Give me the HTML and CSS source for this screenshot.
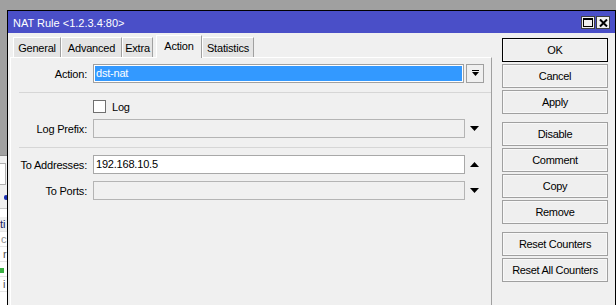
FILE: index.html
```html
<!DOCTYPE html>
<html lang="en">

<head>
    <meta charset="UTF-8">
    <title>NAT Rule</title>
    <link rel="stylesheet" href="styles.css">
</head>

<body>
    <div class="desk">
        <!-- part of the window behind -->
        <div class="behind">
            <div class="behind-pane">
                <div class="behind-field"></div>
                <div class="behind-dot"></div>
                <div class="behind-rows">
                    <div class="b-row b-head">ti</div>
                    <div class="b-row b-gray">c</div>
                    <div class="b-row b-right">r</div>
                    <div class="b-row"><span class="b-icon"></span></div>
                    <div class="b-row b-right">i</div>
                </div>
            </div>
        </div>

        <div class="window">
            <div class="titlebar">
                <span class="title">NAT Rule &lt;1.2.3.4:80&gt;</span>
                <div class="title-btns">
                    <span class="tbtn">
                        <svg width="10" height="9" viewBox="0 0 10 9"><path d="M0 0h10v9H0z M1 2v6h8V2z" fill="#000" fill-rule="evenodd"/></svg>
                    </span>
                    <span class="tbtn">
                        <svg width="9" height="8" viewBox="0 0 9 8"><path d="M1 0.5l7 7M8 0.5l-7 7" stroke="#000" stroke-width="2"/></svg>
                    </span>
                </div>
            </div>

            <div class="client">
                <div class="tabs-area">
                    <div class="tabs">
                        <div class="tab tab-general">General</div>
                        <div class="tab tab-advanced">Advanced</div>
                        <div class="tab tab-extra">Extra</div>
                        <div class="tab tab-action active">Action</div>
                        <div class="tab tab-stats">Statistics</div>
                    </div>

                    <div class="panel">
                        <div class="row">
                            <label class="label">Action:</label>
                            <div class="select">dst-nat</div>
                            <div class="drop-btn">
                                <svg width="7" height="7" viewBox="0 0 7 7"><path d="M0 0h7v1H0z M0 2h7L3.5 6z" fill="#000"/></svg>
                            </div>
                        </div>

                        <div class="sep sep-first"></div>

                        <div class="row row-check">
                            <span class="label"></span>
                            <span class="checkbox"></span>
                            <span class="check-text">Log</span>
                        </div>

                        <div class="row row-prefix">
                            <label class="label">Log Prefix:</label>
                            <div class="field disabled"></div>
                            <div class="tail">
                                <svg width="9" height="5" viewBox="0 0 9 5"><path d="M0 0h9L4.5 5z" fill="#000"/></svg>
                            </div>
                        </div>

                        <div class="sep"></div>

                        <div class="row row-addr">
                            <label class="label">To Addresses:</label>
                            <div class="field">192.168.10.5</div>
                            <div class="tail">
                                <svg width="9" height="5" viewBox="0 0 9 5"><path d="M0 5h9L4.5 0z" fill="#000"/></svg>
                            </div>
                        </div>

                        <div class="row row-ports">
                            <label class="label">To Ports:</label>
                            <div class="field disabled"></div>
                            <div class="tail">
                                <svg width="9" height="5" viewBox="0 0 9 5"><path d="M0 0h9L4.5 5z" fill="#000"/></svg>
                            </div>
                        </div>
                    </div>
                </div>

                <div class="buttons">
                    <button class="btn default">OK</button>
                    <button class="btn">Cancel</button>
                    <button class="btn">Apply</button>
                    <button class="btn group">Disable</button>
                    <button class="btn">Comment</button>
                    <button class="btn">Copy</button>
                    <button class="btn">Remove</button>
                    <button class="btn group">Reset Counters</button>
                    <button class="btn">Reset All Counters</button>
                </div>
            </div>
        </div>
    </div>
</body>

</html>
```

FILE: styles.css
```css
* {
    box-sizing: border-box;
    margin: 0;
    padding: 0;
}

body {
    width: 616px;
    height: 305px;
    overflow: hidden;
    background: #a0a0a0;
    font-family: "Liberation Sans", Arial, sans-serif;
    font-size: 11px;
    letter-spacing: -0.2px;
    color: #000;
}

.desk {
    display: flex;
    height: 305px;
}

/* window in the background */
.behind {
    width: 7px;
    flex: none;
    display: flex;
    flex-direction: column;
    overflow: hidden;
}

.behind-pane {
    margin-top: 155px;
    flex: 1;
    background: #f0f0f0;
    border-top: 1px solid #8a8a8a;
    display: flex;
    flex-direction: column;
}

.behind-field {
    margin-top: 7px;
    height: 22px;
    width: 6px;
    background: #fff;
    border: 1px solid #b0b0b0;
    border-left: none;
}

.behind-dot {
    margin: 10px 0 0 4px;
    width: 4px;
    height: 5px;
    border-radius: 2px;
    background: #1a2fb0;
}

.behind-rows {
    margin-top: 8px;
    border-top: 1px solid #c8c8c8;
    background: #fff;
    flex: 1;
    white-space: nowrap;
}

.b-row {
    height: 15px;
    line-height: 15px;
    font-size: 11px;
    letter-spacing: 0;
    border-bottom: 1px solid #e6e6e6;
}

.b-head {
    margin-top: 8px;
    background: #f0f0f0;
    color: #102060;
}

.b-gray {
    padding-left: 1px;
    color: #909090;
}

.b-right {
    padding-left: 3px;
    color: #505050;
}

.b-icon {
    display: inline-block;
    width: 4px;
    height: 5px;
    background: #3cb043;
}

/* main window */
.window {
    width: 609px;
    margin-top: 10px;
    border: 1px solid #000;
    border-bottom: none;
    background: #f0f0f0;
    display: flex;
    flex-direction: column;
}

.titlebar {
    height: 22px;
    background: #4a4fc8;
    color: #fff;
    display: flex;
    align-items: center;
    padding: 1px 5px 0 5px;
}

.title {
    font-size: 11px;
    letter-spacing: 0;
}

.title-btns {
    margin-left: auto;
    display: flex;
    gap: 1px;
}

.tbtn {
    width: 14px;
    height: 13px;
    background: #f0f0f0;
    border: 1px solid #404040;
    display: flex;
    align-items: center;
    justify-content: center;
}

.client {
    display: flex;
    flex: 1;
}

.tabs-area {
    width: 482px;
    margin-left: 2px;
    display: flex;
    flex-direction: column;
}

.tabs {
    height: 24px;
    display: flex;
    align-items: flex-end;
    padding-left: 3px;
}

.tab {
    height: 20px;
    background: #e4e4e4;
    border: 1px solid;
    border-color: #fff #a0a0a0 transparent #fff;
    border-bottom: none;
    display: flex;
    align-items: center;
    justify-content: center;
}

.tab-general {
    width: 48px;
}

.tab-advanced {
    width: 61px;
}

.tab-extra {
    width: 31px;
    margin-right: 3px;
}

.tab-action {
    width: 46px;
}

.tab-stats {
    width: 52px;
}

.tab.active {
    height: 23px;
    margin-bottom: -1px;
    background: #f0f0f0;
    position: relative;
    z-index: 1;
    padding-bottom: 3px;
}

.panel {
    flex: 1;
    border-top: 1px solid #fff;
    border-left: 1px solid #fff;
    border-right: 1px solid #a0a0a0;
    padding: 6px 0 0 7px;
}

.row {
    display: flex;
    align-items: center;
    height: 19px;
}

.label {
    width: 69px;
    margin-right: 6px;
    text-align: right;
    flex: none;
}

.select {
    width: 371px;
    height: 19px;
    border: 1px solid #a0a0a0;
    background: #3399ff;
    box-shadow: inset 0 0 0 1px #fff;
    color: #fff;
    padding-left: 2px;
    line-height: 17px;
}

.drop-btn {
    width: 18px;
    height: 19px;
    margin-left: 2px;
    border: 1px solid #a0a0a0;
    background: #f0f0f0;
    display: flex;
    align-items: center;
    justify-content: center;
}

.sep {
    height: 1px;
    margin-left: 1px;
    background: #d6d6d6;
    margin-top: 9px;
}

.row-check {
    height: 13px;
    margin-top: 7px;
}

.checkbox {
    width: 13px;
    height: 13px;
    background: #fff;
    border: 1px solid #707070;
}

.check-text {
    margin-left: 6px;
}

.row-prefix {
    margin-top: 6px;
}

.row-addr {
    margin-top: 7px;
}

.row-ports {
    margin-top: 7px;
}

.field {
    width: 372px;
    height: 19px;
    border: 1px solid #a8a8a8;
    background: #fff;
    padding-left: 2px;
    line-height: 17px;
}

.field.disabled {
    background: #f0f0f0;
    border-color: #b4b4b4;
}

.tail {
    width: 26px;
    padding-left: 5px;
    display: flex;
    align-items: center;
}

.buttons {
    width: 106px;
    margin-left: 10px;
    padding-top: 5px;
    display: flex;
    flex-direction: column;
    gap: 2px;
}

.btn {
    height: 24px;
    width: 106px;
    background: #efefef;
    border: 1px solid #a0a0a0;
    box-shadow: inset 0 0 0 1px #f8f8f8;
    font-family: "Liberation Sans", Arial, sans-serif;
    font-size: 11px;
    letter-spacing: -0.3px;
    color: #000;
}

.btn.default {
    border-color: #000;
}

.btn.group {
    margin-top: 6px;
}
```
